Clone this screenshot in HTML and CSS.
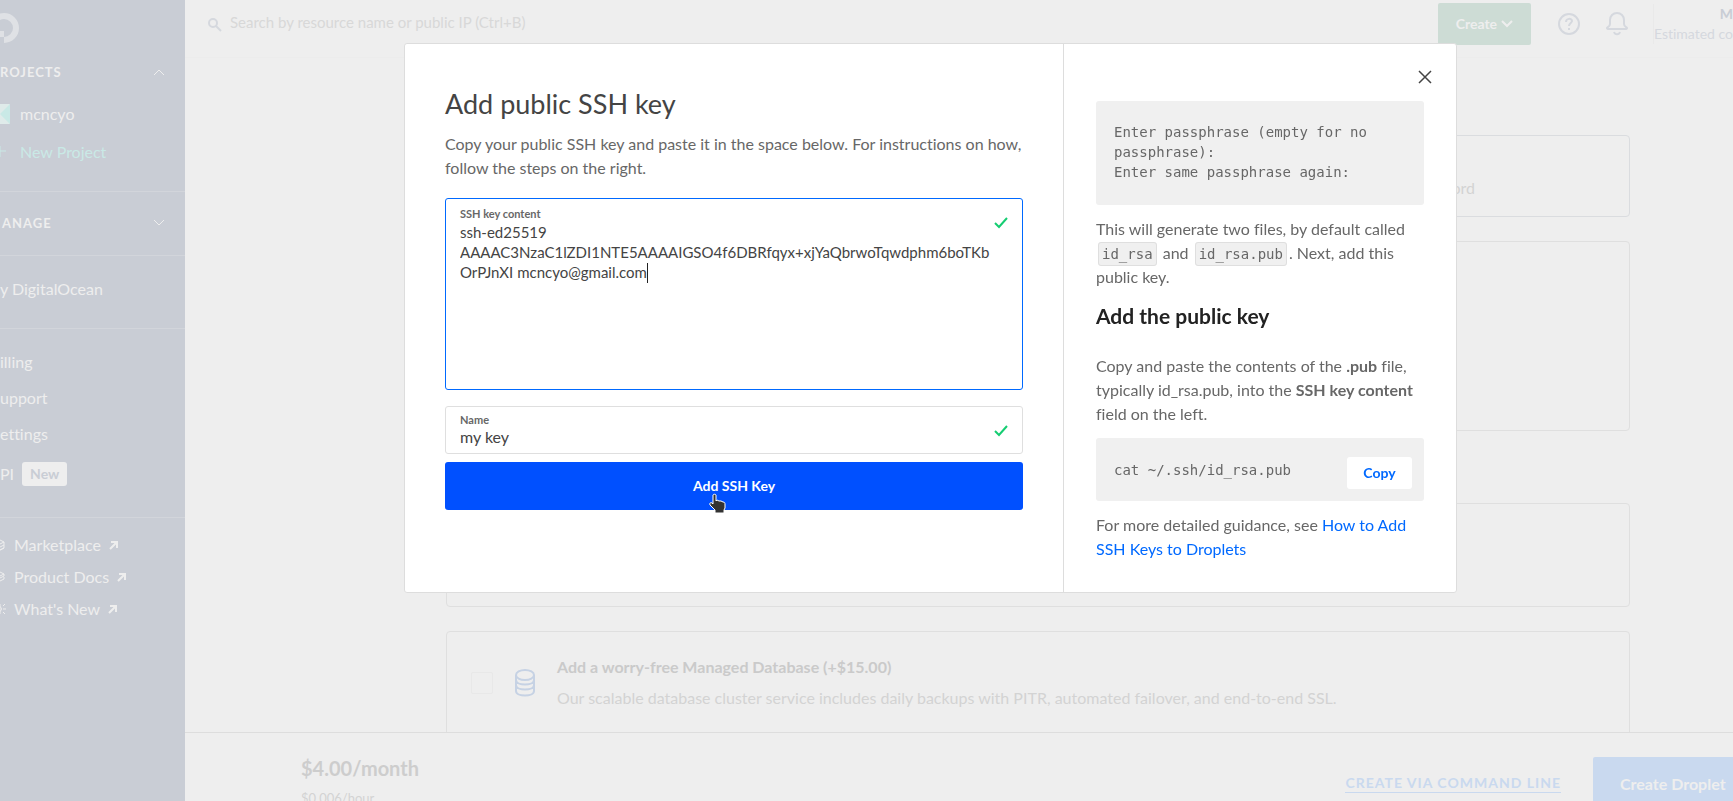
FILE: index.html
```html
<!DOCTYPE html>
<html lang="en">
<head>
<meta charset="utf-8">
<title>Create Droplet - Add public SSH key</title>
<link rel="stylesheet" href="styles.css">
</head>
<body>
<div class="app">
  <aside class="sidebar">
    <nav class="nav" aria-label="Main">
      <a class="logo" href="#" aria-label="Home">
        <svg width="30" height="30" viewBox="0 0 30 30"><path d="M15 30v-6a9 9 0 1 0-9-9H0a15 15 0 1 1 15 15z"/><path d="M9 18h6v6H9zM4 24h5v5H4z"/></svg>
      </a>
      <section class="group group-projects">
        <button class="group-title" type="button">ROJECTS
          <svg width="12" height="8" viewBox="0 0 12 8"><path d="M1 7l5-5 5 5"/></svg>
        </button>
        <a class="project" href="#">
          <svg width="20" height="20" viewBox="0 0 20 20"><rect class="avatar-base" width="20" height="20" rx="1"/><path class="avatar-tri" d="M20 0v20L10 10zM0 0v20l10-10z"/></svg>
          mcncyo
        </a>
        <a class="project project-new" href="#">
          <svg width="20" height="20" viewBox="0 0 20 20"><path class="plus" d="M10 4v11M5 9h11"/></svg>
          New Project
        </a>
      </section>
      <section class="group group-manage">
        <button class="group-title" type="button">ANAGE
          <svg width="12" height="8" viewBox="0 0 12 8"><path d="M1 1l5 5 5-5"/></svg>
        </button>
      </section>
      <section class="group group-by"><a class="link" href="#">y DigitalOcean</a></section>
      <section class="group group-account">
        <a class="link" href="#">illing</a>
        <a class="link" href="#">upport</a>
        <a class="link" href="#">ettings</a>
        <a class="link link-api" href="#">PI <span class="badge">New</span></a>
      </section>
      <section class="group group-more">
        <a class="ext" href="#"><svg class="glyph" width="16" height="16" viewBox="0 0 16 16"><path d="M8 2l6 3-6 3-6-3zM2 5v6l6 3 6-3V5M4 9l4 2 6-3M4 12l4 2 6-3"/></svg>Marketplace<svg class="arrow" width="10" height="10" viewBox="0 0 10 10"><path d="M2 2h6v6M8 2L1 9"/></svg></a>
        <a class="ext" href="#"><svg class="glyph" width="16" height="16" viewBox="0 0 16 16"><path d="M8 2l6 3-6 3-6-3zM14 5v2L8 10 2 7M14 8v2l-6 3-6-3"/></svg>Product Docs<svg class="arrow" width="10" height="10" viewBox="0 0 10 10"><path d="M2 2h6v6M8 2L1 9"/></svg></a>
        <a class="ext" href="#"><svg class="glyph" width="16" height="16" viewBox="0 0 16 16"><path d="M2 6v4h3l5 3V3L5 6zM10 6c2 0 2 4 0 4M13 8h3M13 5l2-2M13 11l2 2"/></svg>What's New<svg class="arrow" width="10" height="10" viewBox="0 0 10 10"><path d="M2 2h6v6M8 2L1 9"/></svg></a>
      </section>
    </nav>
  </aside>

  <div class="page">
    <header class="topbar">
      <label class="search">
        <svg width="16" height="16" viewBox="0 0 16 16"><circle cx="6" cy="6" r="4"/><path d="M9 9l5 5"/></svg>
        <input type="search" aria-label="Search" placeholder="Search by resource name or public IP (Ctrl+B)">
      </label>
      <button class="create" type="button">Create
        <svg width="12" height="8" viewBox="0 0 12 8"><path d="M1 1l5 5 5-5"/></svg>
      </button>
      <button class="icon-btn" type="button" aria-label="Help">
        <svg width="24" height="24" viewBox="0 0 24 24"><circle cx="12" cy="12" r="10"/><path d="M9 10c0-4 6-4 6-1 0 2-3 2-3 5M12 16v2"/></svg>
      </button>
      <button class="icon-btn" type="button" aria-label="Notifications">
        <svg width="24" height="24" viewBox="0 0 24 24"><path d="M12 1C8 1 5 4 5 8v4c0 3-3 3-3 4s1 1 2 1h16c1 0 2 0 2-1s-3-1-3-4V8c0-4-3-7-7-7zM9 20c1 3 5 3 6 0"/></svg>
      </button>
      <div class="account"><strong>M</strong><span>Estimated co</span></div>
    </header>

    <main class="content">
      <section class="card card-auth"><p>ord</p></section>
      <section class="card card-options"></section>
      <section class="card card-extra"></section>
      <section class="card card-db">
        <input type="checkbox" id="db">
        <svg width="20" height="28" viewBox="0 0 20 28"><ellipse cx="10" cy="6" rx="9" ry="5"/><path d="M1 6v16c0 6 18 6 18 0V6M1 11c0 6 18 6 18 0M1 16c0 6 18 6 18 0"/></svg>
        <label for="db"><strong>Add a worry-free Managed Database (+$15.00)</strong><span>Our scalable database cluster service includes daily backups with PITR, automated failover, and end-to-end SSL.</span></label>
      </section>
    </main>

    <footer class="summary">
      <div class="price"><strong>$4.00/month</strong><span>$0.006/hour</span></div>
      <a class="cli" href="#">CREATE VIA COMMAND LINE</a>
      <button class="submit" type="button">Create Droplet</button>
    </footer>
  </div>
</div>

<div class="overlay">
  <div class="modal" role="dialog" aria-labelledby="title">
    <form class="form">
      <h1 id="title">Add public SSH key</h1>
      <p class="intro">Copy your public SSH key and paste it in the space below. For instructions on how, follow the steps on the right.</p>
      <div class="field field-key">
        <label for="key">SSH key content</label>
        <textarea id="key" spellcheck="false">ssh-ed25519
AAAAC3NzaC1lZDI1NTE5AAAAIGSO4f6DBRfqyx+xjYaQbrwoTqwdphm6boTKb
OrPJnXI mcncyo@gmail.com</textarea>
        <span class="caret"></span>
        <svg class="tick" width="14" height="12" viewBox="0 0 14 12"><path d="M1 6l4 4 8-9"/></svg>
      </div>
      <div class="field field-name">
        <label for="name">Name</label>
        <input id="name" type="text" value="my key">
        <svg class="tick" width="14" height="12" viewBox="0 0 14 12"><path d="M1 6l4 4 8-9"/></svg>
      </div>
      <button class="add" type="button">Add SSH Key
        <svg class="pointer" width="20" height="22" viewBox="0 0 20 22"><path d="M6 2c0-1 3-1 3 0v6l1-1 2 1 2 0 2 1c2 0 2 1 2 3v3l-1 2v3H8v-3l-5-5c-1-2 1-3 2-2l1 1z"/></svg>
      </button>
    </form>
    <section class="guide">
      <button class="close" type="button" aria-label="Close">
        <svg width="14" height="14" viewBox="0 0 14 14"><path d="M1 1l12 12M13 1L1 13"/></svg>
      </button>
      <pre class="block">Enter passphrase (empty for no passphrase):
Enter same passphrase again:</pre>
      <p>This will generate two files, by default called <code>id_rsa</code> and <code>id_rsa.pub</code>. Next, add this public key.</p>
      <h2>Add the public key</h2>
      <p>Copy and paste the contents of the <strong>.pub</strong> file, typically id_rsa.pub, into the <strong>SSH key content</strong> field on the left.</p>
      <div class="block command"><code>cat ~/.ssh/id_rsa.pub</code><button type="button">Copy</button></div>
      <p>For more detailed guidance, see <a href="#">How to Add SSH Keys to Droplets</a></p>
    </section>
  </div>
</div>
</body>
</html>
```

FILE: styles.css
```css
* { box-sizing: border-box; }
body { margin: 0; height: 100vh; overflow: hidden; background: #eee; font: 16px/24px Lato, "Open Sans", sans-serif; font-variant-ligatures: none; color: #676767; }
h1, h2, p, pre { margin: 0; }
a { color: inherit; text-decoration: none; }
button, input, textarea { font: inherit; color: inherit; border: 0; padding: 0; background: none; outline: 0; }
svg { flex: none; fill: none; stroke: currentColor; stroke-width: 1; }

.app { display: flex; height: 100vh; }

/* Sidebar */
.sidebar { flex: 0 0 185px; overflow: hidden; background: #c9cdd5; color: #eee; }
.logo { display: block; height: 43px; margin-left: -11px; padding-top: 13px; color: #dfe1e5; }
.logo svg { fill: currentColor; stroke: none; }
.group { display: flex; flex-direction: column; border-bottom: 1px solid #d2d5db; }
.group:last-child { border-bottom: 0; }
.group-title { display: flex; align-items: center; justify-content: space-between; padding-right: 20px; font-size: 13px; font-weight: 700; letter-spacing: 1px; }
.group-projects { height: 149px; padding-top: 17px; gap: 14px; }
.group-projects .group-title { margin-bottom: 4px; }
.project { display: flex; align-items: center; gap: 10px; }
.project svg { margin-left: -10px; }
.avatar-base { fill: #dfebea; stroke: none; }
.avatar-tri { fill: #c9e9e6; stroke: none; }
.project-new { color: #c9e9e6; }
.group-manage { height: 64px; padding: 0 0 2px 2px; justify-content: center; }
.group-by { height: 73px; padding-top: 21px; }
.group-account { height: 189px; padding-top: 21px; gap: 12px; }
.link-api { display: flex; align-items: center; gap: 8px; padding-top: 4px; }
.badge { padding: 0 8px; border-radius: 3px; background: #eee; color: #c9cdd5; font-size: 14px; font-weight: 700; }
.group-more { padding-top: 15px; gap: 8px; }
.ext { display: flex; align-items: center; gap: 8px; }
.ext .glyph { margin-left: -10px; }
.ext .arrow { stroke-width: 2; }

/* Top bar */
.page { flex: 1; min-width: 0; display: flex; flex-direction: column; }
.topbar { display: flex; align-items: flex-start; height: 58px; padding-left: 22px; border-bottom: 1px solid #ececec; color: #d5d8de; }
.search { flex: 1; display: flex; align-items: center; gap: 7px; padding-top: 10px; }
.search svg { margin-top: 6px; stroke-width: 2; }
.search input { width: 340px; font-size: 15px; }
.search input::placeholder { color: #d8d8d8; opacity: 1; }
.create { display: flex; align-items: center; justify-content: center; gap: 4px; width: 93px; height: 42px; margin: 3px 26px 0 0; border-radius: 2px; background: #cddcd5; color: #eee; font-size: 14px; font-weight: 700; }
.create svg { stroke-width: 2; }
.icon-btn { display: flex; margin: 12px 24px 0 0; }
.icon-btn svg { stroke-width: 2; }
.account { display: flex; flex-direction: column; flex: 0 0 80px; height: 40px; margin-top: 4px; border-left: 1px solid #e9e9e9; font-size: 14px; line-height: 20px; white-space: nowrap; }
.account strong { align-self: flex-end; font-size: 14px; color: #c9cdd5; }

/* Page content */
.content { flex: 1; min-height: 0; overflow: hidden; display: flex; flex-direction: column; gap: 24px; padding: 77px 103px 0 261px; color: #d3d3d3; }
.card { flex: none; border: 1px solid #dfdfdf; border-radius: 4px; }
.card-auth { height: 82px; padding: 40px 154px 0 0; border-color: #dadcdf; text-align: right; }
.card-options { height: 190px; }
.card-extra { height: 104px; margin-top: 48px; }
.card-db { display: flex; align-items: center; height: 128px; padding: 0 24px; }
.card-db input { appearance: none; width: 22px; height: 22px; margin: 0 22px 24px 0; border: 1px solid #e8e8e8; border-radius: 2px; }
.card-db svg { margin: 0 22px 24px 0; color: #c6d2e4; stroke-width: 2; }
.card-db label { display: flex; flex-direction: column; gap: 7px; margin-bottom: 26px; }
.card-db strong { color: #cacaca; }

/* Summary */
.summary { display: flex; align-items: flex-start; height: 69px; padding-left: 116px; border-top: 1px solid #ddd; overflow: hidden; }
.price { flex: 1; display: flex; flex-direction: column; gap: 6px; padding-top: 23px; color: #d3d3d3; font-size: 13px; }
.price strong { font-size: 20px; color: #cdcdcd; }
.cli { margin: 41px 32px 0 0; border-bottom: 1px solid #c9d9ef; color: #c9d9ef; font-size: 14px; line-height: 18px; font-weight: 700; letter-spacing: 1px; }
.submit { flex: 0 0 140px; height: 54px; margin-top: 24px; padding-left: 27px; border-radius: 2px 0 0 0; background: #c9d9ef; color: #eee; font-weight: 700; text-align: left; white-space: nowrap; }

/* Dialog */
.overlay { position: fixed; inset: 0; display: flex; align-items: flex-start; justify-content: center; padding: 43px 0 0 128px; }
.modal { display: flex; width: 1053px; border: 1px solid #ddd; border-radius: 3px; background: #fff; }
.form { flex: 1; display: flex; flex-direction: column; padding: 40px; }
h1 { font-size: 27px; line-height: 40px; font-weight: 400; color: #444; }
.intro { margin: 8px 0 18px; }
.field { position: relative; display: flex; flex-direction: column; padding: 7px 14px; border: 1px solid #dfdfdf; border-radius: 3px; color: #444; }
.field label { color: #676767; font-size: 11px; line-height: 16px; font-weight: 700; }
.field-key { height: 192px; margin-bottom: 16px; border-color: #0069ff; }
.field-key textarea { flex: 1; resize: none; font-size: 15px; line-height: 20px; white-space: pre; overflow: hidden; }
.caret { position: absolute; top: 64px; left: 201px; width: 1px; height: 20px; background: #222; }
.field-name { height: 48px; margin-bottom: 8px; padding-top: 5px; }
.field-name input { line-height: 18px; height: 18px; }
.tick { position: absolute; top: 18px; right: 14px; color: #15cd72; stroke-width: 2; }
.add { position: relative; height: 48px; border-radius: 3px; background: #0050ff; color: #fff; font-size: 14px; font-weight: 700; }
.pointer { position: absolute; top: 31px; left: 262px; fill: #333; stroke: #fff; }
.guide { position: relative; flex: 0 0 393px; padding: 57px 32px 31px; border-left: 1px solid #ddd; }
.close { position: absolute; top: 26px; right: 24px; display: flex; color: #444; }
.close svg { stroke-width: 1.5; }
.block { border-radius: 3px; background: #f0f0f0; font: 14px/20px "DejaVu Sans Mono", monospace; }
pre.block { margin-bottom: 12px; padding: 21px 18px 23px; white-space: pre-wrap; }
.guide p code { margin: 0 2px; padding: 3px; border: 1px solid #dfdfdf; border-radius: 3px; background: #f0f0f0; font: 14px/16px "DejaVu Sans Mono", monospace; }
h2 { margin: 11px 0 22px; font-size: 21px; line-height: 32px; font-weight: 700; color: #222; }
.command { display: flex; align-items: center; justify-content: space-between; height: 63px; margin: 12px 0; padding: 0 12px 0 18px; }
.command code { font: inherit; }
.command button { width: 65px; height: 32px; margin-top: 7px; border-radius: 3px; background: #fff; color: #0069ff; font: 700 14px/24px Lato, sans-serif; }
.guide a { color: #0069ff; }
```
